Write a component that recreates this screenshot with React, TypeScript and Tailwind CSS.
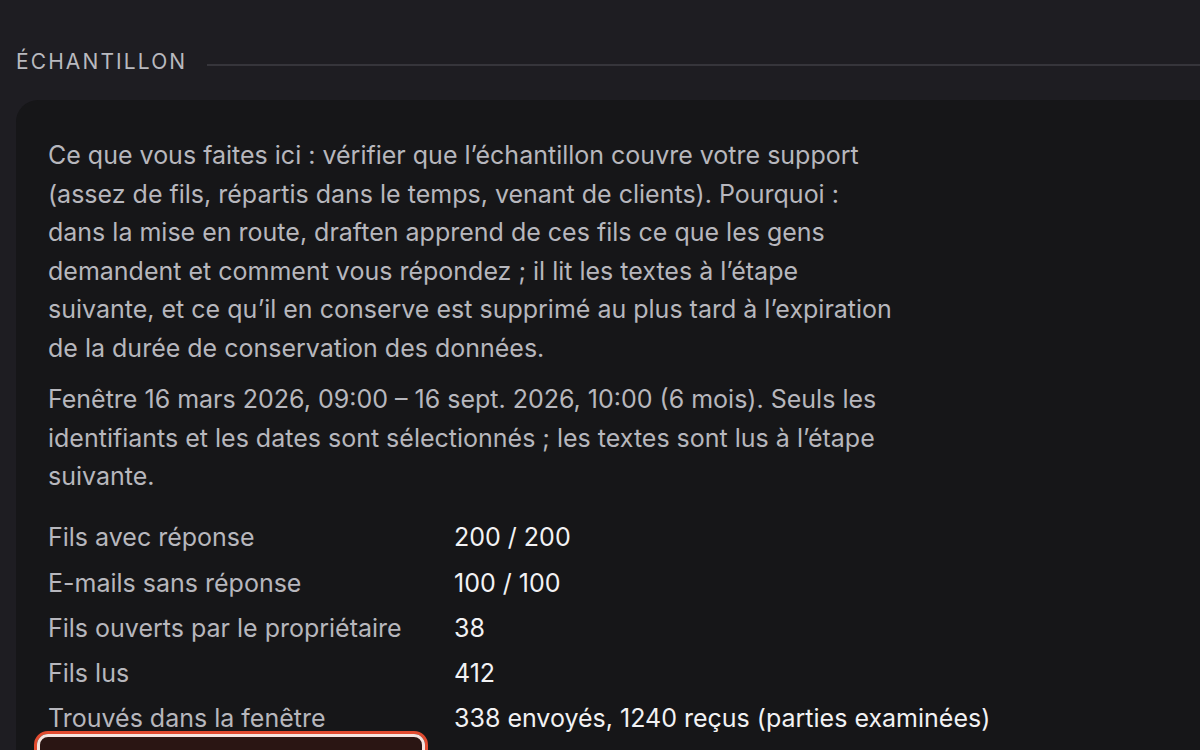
import React from "react";

const rows: [string, string][] = [
  ["Fils avec réponse", "200 / 200"],
  ["E-mails sans réponse", "100 / 100"],
  ["Fils ouverts par le propriétaire", "38"],
  ["Fils lus", "412"],
  ["Trouvés dans la fenêtre", "338 envoyés, 1240 reçus (parties examinées)"],
];

export default function App() {
  return (
    <div
      className="w-[1200px] h-[750px] overflow-hidden bg-[#1e1d22] text-[#b4b4ba]"
      style={{ fontFamily: "Inter, 'Noto Sans', sans-serif" }}
    >
      <div className="pt-[48px] pl-[16px]">
        <div className="flex items-center gap-[20px]">
          <h2 className="text-[21px] leading-[28px] tracking-[0.1em] text-[#b9b9bf] font-normal">
            ÉCHANTILLON
          </h2>
          <div className="flex-1 h-[2px] bg-[#36353b] mt-[6px]" />
        </div>
        <div className="mt-[24px] w-[1220px] rounded-[22px] bg-[#161618] pl-[32px] pr-[32px] pt-[36px] pb-[40px]">
          <div className="whitespace-nowrap text-[25px] leading-[38.5px] text-[#b7b7bd]">
            <p>
              Ce que vous faites ici&nbsp;: vérifier que l’échantillon couvre votre support
              <br />
              (assez de fils, répartis dans le temps, venant de clients). Pourquoi&nbsp;:
              <br />
              dans la mise en route, draften apprend de ces fils ce que les gens
              <br />
              demandent et comment vous répondez&nbsp;; il lit les textes à l’étape
              <br />
              suivante, et ce qu’il en conserve est supprimé au plus tard à l’expiration
              <br />
              de la durée de conservation des données.
            </p>
            <p className="mt-[13px]">
              Fenêtre 16 mars 2026, 09:00 – 16 sept. 2026, 10:00 (6 mois). Seuls les
              <br />
              identifiants et les dates sont sélectionnés&nbsp;; les textes sont lus à l’étape
              <br />
              suivante.
            </p>
          </div>
          <div className="mt-[20px] text-[25px]">
            {rows.map(([k, v]) => (
              <div key={k} className="flex h-[45.25px] items-center">
                <div className="w-[406px] text-[#b7b7bd]">{k}</div>
                <div className="text-[#f2f2f4]">{v}</div>
              </div>
            ))}
          </div>
          <div className="mt-[-11px] ml-[-14px] w-[394px] rounded-[14px] border-[3px] border-[#e14b30]">
            <div className="h-[60px] rounded-[11px] border-[3px] border-[#f4e4e0] bg-[#2a1513]" />
          </div>
        </div>
      </div>
    </div>
  );
}
